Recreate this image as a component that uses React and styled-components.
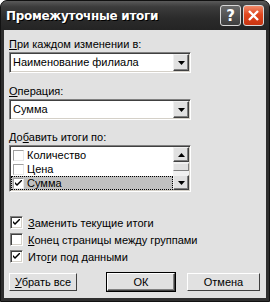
import React from 'react';
import styled, { createGlobalStyle } from 'styled-components';

const Global = createGlobalStyle`
	html, body { margin: 0; padding: 0; background: #ffffff; }
	body { font-family: "Liberation Sans", Arial, sans-serif; font-size: 11px; color: #000; }
`;

const Window = styled.div`
	width: 270px;
	height: 302px;
	box-sizing: border-box;
	display: flex;
	flex-direction: column;
	background: #2e2e2e;
	border-radius: 7px 7px 0 0;
	border: 1px solid #111;
	overflow: hidden;
`;

const TitleBar = styled.div`
	height: 29px;
	flex: none;
	display: flex;
	align-items: center;
	padding: 0 5px 0 5px;
	background: linear-gradient( #5a5a5a 0%, #3c3c3c 20%, #2b2b2b 60%, #242424 100% );
`;

const Title = styled.div`
	flex: 1;
	color: #fff;
	font-family: "DejaVu Sans", sans-serif;
	font-weight: bold;
	font-size: 12px;
	text-shadow: 1px 1px 0 #000;
	letter-spacing: -0.3px;
`;

const CapButton = styled.div`
	width: 21px;
	height: 21px;
	box-sizing: border-box;
	margin-left: 2px;
	border-radius: 3px;
	border: 1px solid #d8d8d8;
	display: flex;
	align-items: center;
	justify-content: center;
	background: ${ ( { red } ) =>
		red ? 'linear-gradient( #f08a6a, #e0471f 45%, #c83410 )' : 'linear-gradient( #6a6a6a, #3e3e3e )' };
	color: #fff;
	font-family: "DejaVu Sans", sans-serif;
	font-weight: bold;
	font-size: 15px;
`;

const Body = styled.div`
	flex: 1;
	margin: 0 3px 3px;
	background: #e1e1e1;
	padding: 8px 5px 0 5px;
	display: flex;
	flex-direction: column;
`;

const Label = styled.div`
	height: 13px;
	line-height: 13px;
	margin-top: ${ ( { top } ) => top || 0 }px;
	margin-bottom: 1px;
`;

const Sunken = styled.div`
	width: 182px;
	box-sizing: border-box;
	border: 1px solid;
	border-color: #808080 #ffffff #ffffff #808080;
	background: #fff;
`;

const Combo = styled( Sunken )`
	height: 21px;
	display: flex;
	align-items: stretch;
	padding: 1px;
	box-shadow: inset 1px 1px 0 #404040, inset -1px -1px 0 #d4d0c8;
`;

const ComboText = styled.div`
	flex: 1;
	padding-left: 2px;
	line-height: 17px;
`;

const ArrowBtn = styled.div`
	width: 16px;
	box-sizing: border-box;
	display: flex;
	align-items: center;
	justify-content: center;
	background: #e1e1e1;
	border: 1px solid;
	border-color: #f0f0f0 #404040 #404040 #f0f0f0;
	box-shadow: inset -1px -1px 0 #808080;
	height: ${ ( { h } ) => h || 'auto' };
`;

const Arrow = ( { up } ) => (
	<svg width="7" height="4" viewBox="0 0 7 4">
		<path d={ up ? 'M3.5 0 L7 4 L0 4 Z' : 'M0 0 L7 0 L3.5 4 Z' } fill="#000" />
	</svg>
);

const List = styled( Sunken )`
	height: 47px;
	display: flex;
	padding: 1px;
	box-shadow: inset 1px 1px 0 #404040, inset -1px -1px 0 #d4d0c8;
`;

const Items = styled.div`
	flex: 1;
	display: flex;
	flex-direction: column;
	padding-top: 1px;
`;

const Item = styled.div`
	height: 14px;
	display: flex;
	align-items: center;
	padding-left: 2px;
	gap: 3px;
	background: ${ ( { selected } ) => ( selected ? '#c0c0c0' : 'transparent' ) };
	outline: ${ ( { selected } ) => ( selected ? '1px dotted #000' : 'none' ) };
	outline-offset: -1px;
`;

const FlatBox = styled.div`
	width: 11px;
	height: 11px;
	box-sizing: border-box;
	border: 1px solid;
	border-color: #a0a0a0 #e8e8e8 #e8e8e8 #a0a0a0;
	background: #fff;
	display: flex;
	align-items: center;
	justify-content: center;
`;

const ScrollBar = styled.div`
	width: 16px;
	display: flex;
	flex-direction: column;
	background: #f0f0f0;
`;

const Thumb = styled.div`
	height: 8px;
	margin: 1px 0;
	box-sizing: border-box;
	border: 1px solid;
	border-color: #f0f0f0 #808080 #808080 #f0f0f0;
	background: #e1e1e1;
`;

const Track = styled.div`
	flex: 1;
`;

const Options = styled.div`
	margin-top: 22px;
	display: flex;
	flex-direction: column;
`;

const Option = styled.div`
	height: 17px;
	display: flex;
	align-items: center;
	gap: 5px;
	padding-left: 1px;
`;

const Box = styled.div`
	width: 13px;
	height: 13px;
	box-sizing: border-box;
	border: 1px solid;
	border-color: #808080 #ffffff #ffffff #808080;
	box-shadow: inset 1px 1px 0 #404040, inset -1px -1px 0 #d4d0c8;
	background: #fff;
	display: flex;
	align-items: center;
	justify-content: center;
`;

const Check = () => (
	<svg width="7" height="7" viewBox="0 0 7 7">
		<path d="M0 2 L0 4 L2 6 L7 1 L7 -1 L2 4 Z" fill="#000" />
	</svg>
);

const Buttons = styled.div`
	margin-top: 8px;
	display: flex;
`;

const Button = styled.div`
	height: 18px;
	width: ${ ( { w } ) => w }px;
	margin-left: ${ ( { ml } ) => ml || 0 }px;
	box-sizing: border-box;
	display: flex;
	align-items: center;
	justify-content: center;
	background: #e1e1e1;
	border: 1px solid;
	border-color: #ffffff #404040 #404040 #ffffff;
	box-shadow: inset -1px -1px 0 #808080, ${ ( { primary } ) => ( primary ? '0 0 0 1px #000' : 'none' ) };
`;

const Text = ( { before = '', key: _k, mark, after = '' } ) => (
	<span>
		{ before }
		<u>{ mark }</u>
		{ after }
	</span>
);

export default function App() {
	return (
		<>
			<Global />
			<Window>
				<TitleBar>
					<Title>Промежуточные итоги</Title>
					<CapButton>?</CapButton>
					<CapButton red>
						<svg width="11" height="11" viewBox="0 0 11 11">
							<path d="M1 1 L10 10 M10 1 L1 10" stroke="#fff" strokeWidth="2.4" />
						</svg>
					</CapButton>
				</TitleBar>
				<Body>
					<Label><Text mark="П" after="ри каждом изменении в:" /></Label>
					<Combo>
						<ComboText>Наименование филиала</ComboText>
						<ArrowBtn><Arrow /></ArrowBtn>
					</Combo>
					<Label top={ 12 }><Text mark="О" after="перация:" /></Label>
					<Combo>
						<ComboText>Сумма</ComboText>
						<ArrowBtn><Arrow /></ArrowBtn>
					</Combo>
					<Label top={ 11 }><Text before="До" mark="б" after="авить итоги по:" /></Label>
					<List>
						<Items>
							<Item><FlatBox /><span>Количество</span></Item>
							<Item><FlatBox /><span>Цена</span></Item>
							<Item selected><FlatBox><Check /></FlatBox><span>Сумма</span></Item>
						</Items>
						<ScrollBar>
							<ArrowBtn h="15px"><Arrow up /></ArrowBtn>
							<Thumb />
							<Track />
							<ArrowBtn h="15px"><Arrow /></ArrowBtn>
						</ScrollBar>
					</List>
					<Options>
						<Option><Box><Check /></Box><Text mark="З" after="аменить текущие итоги" /></Option>
						<Option><Box /><Text mark="К" after="онец страницы между группами" /></Option>
						<Option><Box><Check /></Box><Text before="Ито" mark="г" after="и под данными" /></Option>
					</Options>
					<Buttons>
						<Button w={ 68 }><Text mark="У" after="брать все" /></Button>
						<Button w={ 68 } ml={ 30 } primary>ОК</Button>
						<Button w={ 73 } ml={ 12 }>Отмена</Button>
					</Buttons>
				</Body>
			</Window>
		</>
	);
}
